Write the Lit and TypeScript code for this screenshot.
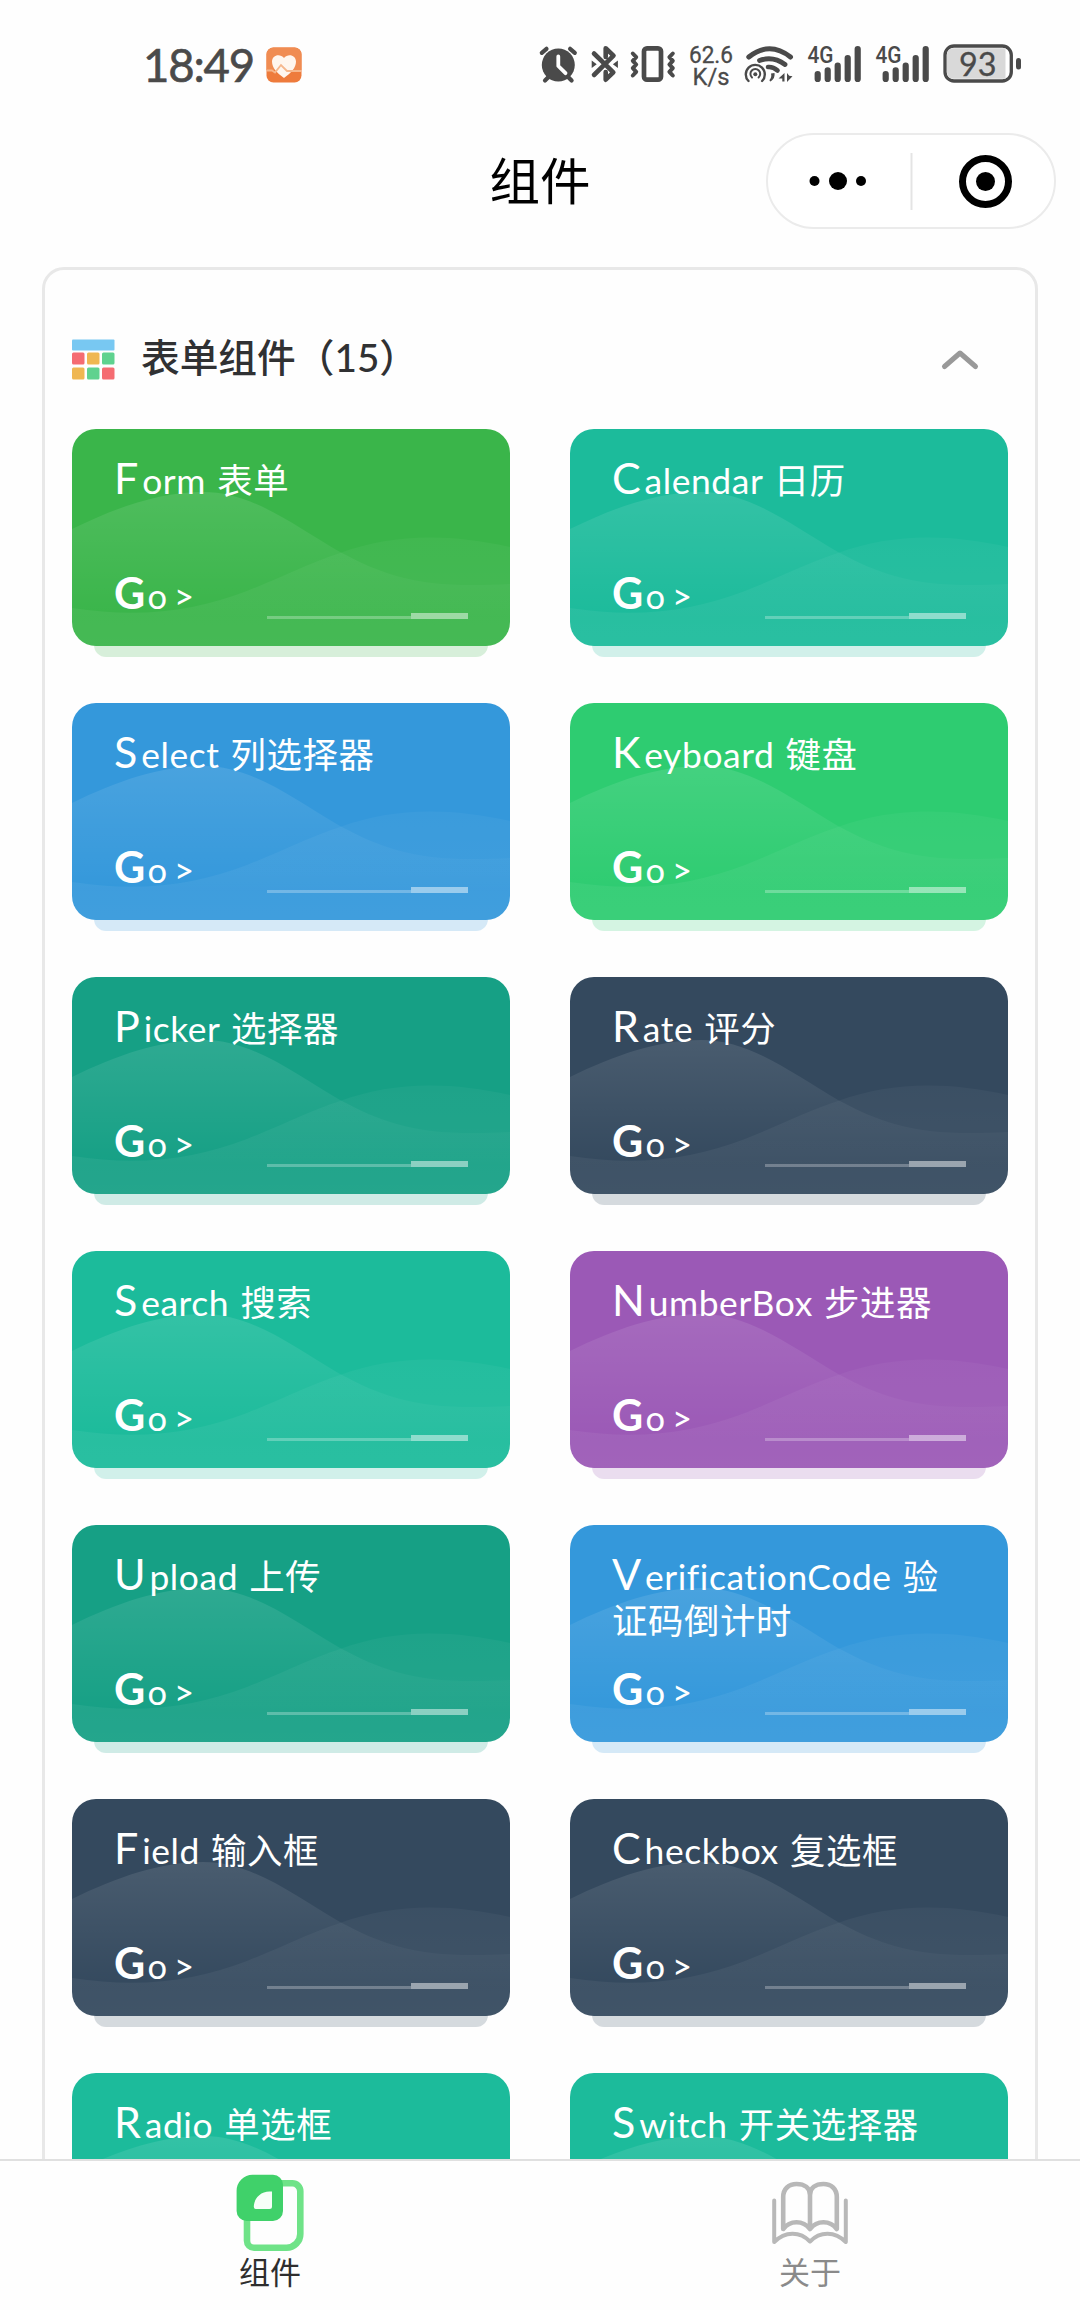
import { LitElement, html, css, svg } from "lit";
import { customElement, property } from "lit/decorators.js";

interface Entry {
  name: string;
  color: string;
}

const ENTRIES: Entry[] = [
  { name: "Form 表单", color: "#3ab54a" },
  { name: "Calendar 日历", color: "#1cbb9b" },
  { name: "Select 列选择器", color: "#3498db" },
  { name: "Keyboard 键盘", color: "#2ecc71" },
  { name: "Picker 选择器", color: "#16a085" },
  { name: "Rate 评分", color: "#34495e" },
  { name: "Search 搜索", color: "#1cbb9b" },
  { name: "NumberBox 步进器", color: "#9b59b6" },
  { name: "Upload 上传", color: "#16a085" },
  { name: "VerificationCode 验证码倒计时", color: "#3498db" },
  { name: "Field 输入框", color: "#34495e" },
  { name: "Checkbox 复选框", color: "#34495e" },
  { name: "Radio 单选框", color: "#1cbb9b" },
  { name: "Switch 开关选择器", color: "#1cbb9b" },
];

@customElement("status-bar")
export class StatusBar extends LitElement {
  static styles = css`
    :host {
      display: flex;
      align-items: flex-start;
      height: 90px;
      padding: 0 59px 0 143px;
      box-sizing: border-box;
      color: #4a4a4a;
    }
    .time {
      font: 400 45.5px/50px Lato, sans-serif;
      -webkit-text-stroke: 0.6px #4a4a4a;
      letter-spacing: -1.2px;
      width: 123px;
      margin-top: 40px;
    }
    svg {
      display: block;
      flex: none;
    }
    .app { margin-top: 47px; }
    .icons {
      margin-left: auto;
      margin-top: 35px;
    }
  `;

  private signal(x: number) {
    return svg`
      <g transform="translate(${x} 0)">
        <text x="271.500" y="28.300" font-family="Roboto" font-size="24" font-weight="500"
          textLength="26" lengthAdjust="spacingAndGlyphs" fill="#4a4a4a">4G</text>
        <path d="M281.700 39v5M291.700 35.300v8.700M301.700 30.700v13.300M311.700 23v21M321.700 14v30"
          stroke="#4a4a4a" stroke-width="6.2" stroke-linecap="round"/>
      </g>`;
  }

  render() {
    return html`
      <div class="time">18:49</div>
      <svg class="app" width="36" height="36" viewBox="0 0 36 36">
        <rect x="0.5" y="0.5" width="35" height="35" rx="7" fill="#ee7b3c"/>
        <path d="M0.500 23V7.500a7 7 0 0 1 7-7h21a7 7 0 0 1 7 7V23z" fill="#f08c52"/>
        <path d="M18 31C11 26 6 21 6 14.500 6 8 14 6 18 11 22 6 30 8 30 14.500 30 21 25 26 18 31z" fill="#fff6ee"/>
        <path d="M1 23.500h5l3 2 6-7.500 6 6h14" fill="none" stroke="#f6b78c" stroke-width="1.8"/>
      </svg>
      <svg class="icons" width="485" height="55" viewBox="0 0 485 55">
        <circle cx="22.300" cy="30" r="16.500" fill="#4a4a4a"/>
        <g stroke="#4a4a4a" stroke-linecap="round" stroke-width="4.2">
          <path d="M5.800 17.800l4.700-4M38.800 17.800l-4.700-4"/>
          <path d="M12 42.500l-3 3M32.600 42.500l3 3"/>
        </g>
        <path d="M22.300 21.500v9.500l7.200 7.200" fill="none" stroke="#fff" stroke-width="3.8" stroke-linecap="round" stroke-linejoin="round"/>
        <path d="M58 18.500L77.300 37.300 69.700 44.700V37M69.700 22V13.300L77.500 20.600 58 40" fill="none" stroke="#4a4a4a" stroke-width="4.6" stroke-linejoin="round" stroke-linecap="round"/>
        <path d="M55.700 25.500l5 3.800-5 3.800zM81.900 25.500l-5 3.800 5 3.800z" fill="#4a4a4a"/>
        <rect x="108" y="13.300" width="17" height="31.400" rx="3" fill="none" stroke="#4a4a4a" stroke-width="4.7"/>
        <path d="M96.800 18.500l3.400 3.600-3.400 3.700 3.400 3.700-3.400 3.700 3.400 3.700-3.400 3.600M136.800 18.500l-3.400 3.600 3.400 3.700-3.400 3.700 3.400 3.700-3.400 3.700 3.400 3.600" fill="none" stroke="#4a4a4a" stroke-width="4" stroke-linecap="round" stroke-linejoin="round"/>
        <g font-family="Roboto" font-size="23" fill="#4a4a4a" stroke="#4a4a4a" stroke-width="0.3">
          <text x="153" y="27.500" textLength="44" lengthAdjust="spacingAndGlyphs">62.6</text>
          <text x="156.500" y="50" textLength="37" lengthAdjust="spacingAndGlyphs">K/s</text>
        </g>
        <g fill="none" stroke="#4a4a4a" stroke-linecap="round">
          <path d="M212.800 22Q233.500 5.500 254.500 22" stroke-width="5"/>
          <path d="M223.500 25.500Q237 20.500 249 29.500" stroke-width="4.8"/>
          <path d="M232 32Q237 31.500 241.500 35.500" stroke-width="4.6"/>
          <path d="M212.500 46a9.500 9.500 0 1 1 13.600 0" stroke-width="2.4"/>
          <path d="M216 42.500a4.900 4.900 0 1 1 6.600 0" stroke-width="2"/>
        </g>
        <circle cx="219.300" cy="39.300" r="2" fill="#4a4a4a"/>
        <path d="M235 38.500l3.500-0.500q1 5-4 8.500-1-0.500-1-1.500 2.500-3 1.500-6.500zM242.500 43.500l6-5.500v8.500h-2.200v-3zM251 38l2.200 2.700 3.300 0.500-5.500 5.800z" fill="#4a4a4a"/>
        ${this.signal(0)} ${this.signal(68)}
        <rect x="409" y="11" width="66.300" height="35" rx="9" fill="#fff" stroke="#4a4a4a" stroke-width="3.3"/>
        <path d="M469.500 13.300v30.400H417a6 6 0 0 1-6-6V19.300a6 6 0 0 1 6-6z" fill="#d9d9d9"/>
        <rect x="480" y="23" width="5" height="11.500" rx="2.500" fill="#4a4a4a"/>
        <text x="423" y="40.500" font-family="Lato" font-size="32.500" textLength="37.500" lengthAdjust="spacingAndGlyphs" fill="#4a4a4a" stroke="#4a4a4a" stroke-width="0.3">93</text>
      </svg>
    `;
  }
}

@customElement("component-card")
export class ComponentCard extends LitElement {
  @property() name = "";
  @property() color = "#1cbb9b";

  static styles = css`
    :host { display: block; }
    .card {
      position: relative;
      height: 217px;
      box-sizing: border-box;
      padding: 27px 42px 0;
      color: #fff;
      font-family: Lato, "Noto Sans CJK SC", sans-serif;
    }
    .shade {
      position: absolute;
      left: 22px;
      right: 22px;
      bottom: -11px;
      height: 40px;
      border-radius: 12px;
      opacity: 0.2;
    }
    .face {
      position: absolute;
      left: 0;
      top: 0;
      width: 438px;
      height: 217px;
      border-radius: 24px;
      overflow: hidden;
    }
    .face svg { display: block; }
    .body {
      position: relative;
      height: 190px;
      display: flex;
      flex-direction: column;
      justify-content: space-between;
    }
    .name {
      font-size: 35.4px;
      line-height: 44px;
      letter-spacing: 0.6px;
      word-spacing: 1.5px;
    }
    .name::first-letter {
      font-size: 43px;
      line-height: 44px;
      letter-spacing: 3.8px;
    }
    .go {
      font-size: 34.5px;
      line-height: 44px;
      margin-bottom: 28px;
      word-spacing: -2px;
    }
    .go::first-letter {
      font-size: 43px;
      font-weight: 700;
      line-height: 44px;
      letter-spacing: 2.3px;
    }
  `;

  render() {
    return html`
      <div class="card">
        <div class="shade" style="background:${this.color}"></div>
        <div class="face" style="background:${this.color}">
          <svg width="438" height="217" viewBox="0 0 438 217">
            <defs>
              <linearGradient id="a" x1="0" y1="63" x2="0" y2="190" gradientUnits="userSpaceOnUse">
                <stop offset="0" stop-color="#fff" stop-opacity="0.105"/>
                <stop offset="1" stop-color="#fff" stop-opacity="0"/>
              </linearGradient>
              <linearGradient id="b" x1="0" y1="108" x2="0" y2="217" gradientUnits="userSpaceOnUse">
                <stop offset="0" stop-color="#fff" stop-opacity="0.035"/>
                <stop offset="1" stop-color="#fff" stop-opacity="0.06"/>
              </linearGradient>
            </defs>
            <path fill="url(#a)" d="M0 100C45 78 88 63 131 63C180 63 220 95 268 123C315 148 350 160 438 155V217H0Z"/>
            <path fill="url(#b)" d="M0 179C70 190 125 181 175 162C215 146 240 133 268 124C320 105 375 104 438 118V217H0Z"/>
            <rect x="195" y="187" width="144" height="3" fill="#fff" fill-opacity="0.27"/>
            <rect x="339" y="184" width="57" height="6" fill="#fff" fill-opacity="0.48"/>
          </svg>
        </div>
        <div class="body">
          <div class="name">${this.name}</div>
          <div class="go">Go &gt;</div>
        </div>
      </div>
    `;
  }
}

@customElement("app-root")
export class AppRoot extends LitElement {
  static styles = css`
    :host {
      display: flex;
      flex-direction: column;
      height: 2310px;
      overflow: hidden;
      background: #fefefe;
      font-family: Lato, "Noto Sans CJK SC", sans-serif;
    }
    .nav {
      flex: none;
      height: 177px;
      display: grid;
      grid-template-columns: 1fr auto 1fr;
      align-items: center;
      padding: 4px 24px 0 24px;
      box-sizing: border-box;
    }
    .title {
      grid-column: 2;
      padding-bottom: 5px;
      font: 400 50.5px/60px "Noto Sans CJK SC", sans-serif;
      color: #000;
    }
    .capsule {
      justify-self: end;
      width: 290px;
      height: 96px;
      box-sizing: border-box;
      border: 2px solid #ebebeb;
      border-radius: 48px;
      background: #fff;
    }
    .capsule svg { display: block; }
    .view {
      flex: 1;
      min-height: 0;
      overflow: hidden;
      padding: 0 42px;
    }
    .panel {
      border: 3px solid #e8e8e8;
      border-radius: 22px;
      padding: 0 27px 40px;
    }
    .head {
      display: flex;
      align-items: center;
      height: 159px;
      padding: 20px 26px 0 0;
      box-sizing: border-box;
      color: #303133;
      font: 500 38.7px/50px Lato, "Noto Sans CJK SC", sans-serif;
    }
    .head .label {
      margin-left: 26px;
      padding-bottom: 5px;
    }
    .head .arrow { margin-left: auto; }
    .grid {
      display: grid;
      grid-template-columns: 438px 438px;
      justify-content: space-between;
      row-gap: 57px;
    }
    .tabs {
      flex: none;
      height: 151px;
      box-sizing: border-box;
      border-top: 2px solid #e0e0e0;
      display: grid;
      grid-template-columns: 1fr 1fr;
    }
    .tab {
      display: flex;
      flex-direction: column;
      align-items: center;
      padding-top: 12px;
      font: 400 31px/36px "Noto Sans CJK SC", sans-serif;
      color: #8a8a8a;
    }
    .tab.on { color: #2e2e2e; }
    .tab svg { display: block; }
  `;

  render() {
    return html`
      <status-bar></status-bar>
      <div class="nav">
        <div class="title">组件</div>
        <div class="capsule">
          <svg width="286" height="92" viewBox="0 0 286 92">
            <circle cx="46.500" cy="46" r="5"/>
            <circle cx="70" cy="46" r="9"/>
            <circle cx="93" cy="46" r="5"/>
            <path d="M143.500 18v57" stroke="#e4e4e4" stroke-width="2"/>
            <circle cx="217.500" cy="46.500" r="23" fill="none" stroke="#000" stroke-width="7"/>
            <circle cx="217.500" cy="46.500" r="9.500"/>
          </svg>
        </div>
      </div>
      <div class="view">
        <div class="panel">
          <div class="head">
            <svg width="43" height="42" viewBox="0 0 43 42">
              <rect x="0" y="0.500" width="42.500" height="11" rx="1" fill="#78c8f2"/>
              <rect x="0" y="13.500" width="12.500" height="12" rx="1.500" fill="#f56c72"/>
              <rect x="15" y="13.500" width="12.500" height="12" rx="1.500" fill="#efb752"/>
              <rect x="30" y="13.500" width="12.500" height="12" rx="1.500" fill="#5fd28f"/>
              <rect x="0" y="28.500" width="12.500" height="12" rx="1.500" fill="#efb752"/>
              <rect x="15" y="28.500" width="12.500" height="12" rx="1.500" fill="#5fd28f"/>
              <rect x="30" y="28.500" width="12.500" height="12" rx="1.500" fill="#f56c72"/>
            </svg>
            <span class="label">表单组件（15）</span>
            <svg class="arrow" width="44" height="24" viewBox="0 0 44 24">
              <path d="M6.500 18.500L22 5l15.500 13.500" fill="none" stroke="#999" stroke-width="5" stroke-linecap="round" stroke-linejoin="round"/>
            </svg>
          </div>
          <div class="grid">
            ${ENTRIES.map(
              (e) => html`<component-card .name=${e.name} .color=${e.color}></component-card>`
            )}
          </div>
        </div>
      </div>
      <div class="tabs">
        <div class="tab on">
          <svg width="68" height="80" viewBox="0 0 68 80">
            <path d="M19 10.300H56.300a8 8 0 0 1 8 8V61a13.700 13.700 0 0 1-13.700 13.700H18a7 7 0 0 1-7-7V18.300a8 8 0 0 1 8-8z" fill="none" stroke="#6fe388" stroke-width="6.600"/>
            <path d="M16.600 1.700H37a10 10 0 0 1 10 10V38a10 10 0 0 1-10 10H10.600a10 10 0 0 1-10-10V17.700a16 16 0 0 1 16-16z" fill="#40d16a"/>
            <path d="M33.500 18.500H36V33.500a2.500 2.500 0 0 1-2.500 2.500H20a2.200 2.200 0 0 1-2.200-2.200C18 25 25 18.500 33.500 18.500z" fill="#f6fff8"/>
          </svg>
          <span>组件</span>
        </div>
        <div class="tab">
          <svg width="82" height="80" viewBox="0 0 82 80" fill="none" stroke="#b8b8b8" stroke-linejoin="round" stroke-linecap="round">
            <path d="M41 22C41 15 35.500 11 27.600 11S14.200 16 14.200 24V56C21 47 34 47 41 56C48 47 61 47 67.800 56V24C67.800 16 62.300 11 54.400 11S41 15 41 22V55" stroke-width="4.600"/>
            <path d="M5.200 27.500V69C16 58 31 58 41 68.500C51 58 66 58 76.800 69V27.500" stroke-width="4"/>
          </svg>
          <span>关于</span>
        </div>
      </div>
    `;
  }
}
